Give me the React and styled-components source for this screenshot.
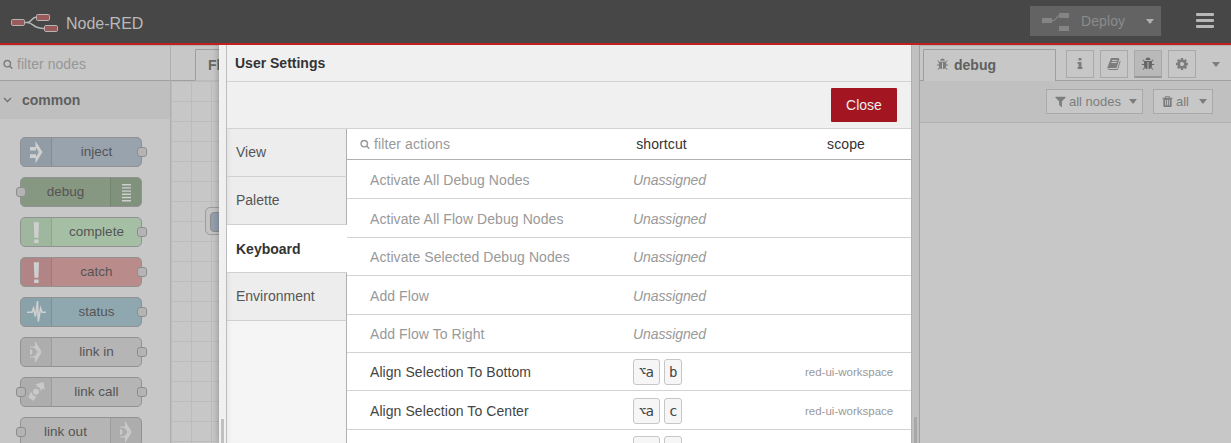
import React from "react";
import styled, { createGlobalStyle, css } from "styled-components";

const Global = createGlobalStyle`
  * { box-sizing: border-box; }
  body { margin: 0; overflow: hidden; background: #c7c7c7; }
  body, input, button { font-family: "Liberation Sans", Arial, sans-serif; font-size: 14px; }
`;

/* ---------- icons ---------- */

const PATHS = {
  search:
    "M1216 832q0-185-131.5-316.5t-316.5-131.5-316.5 131.5-131.5 316.5 131.5 316.5 316.5 131.5 316.5-131.5 131.5-316.5zm512 832q0 52-38 90t-90 38q-54 0-90-38l-343-342q-179 124-399 124-143 0-273.5-55.5t-225-150-150-225-55.5-273.5 55.5-273.5 150-225 225-150 273.5-55.5 273.5 55.5 225 150 150 225 55.5 273.5q0 220-124 399l343 343q37 37 37 90z",
  cog: "M1152 896q0-106-75-181t-181-75-181 75-75 181 75 181 181 75 181-75 75-181zm512-109v222q0 12-8 23t-20 13l-185 28q-19 54-39 91 35 50 107 138 10 12 10 25t-9 23q-27 37-99 108t-94 71q-12 0-26-9l-138-108q-44 23-91 38-16 136-29 186-7 28-36 28h-222q-14 0-24.5-8.5t-11.5-21.5l-28-184q-49-16-90-37l-141 107q-10 9-25 9-14 0-25-11-126-114-165-168-7-10-7-23 0-12 8-23 15-21 51-66.5t54-70.5q-27-50-41-99l-183-27q-13-2-21-12.5t-8-23.5v-222q0-12 8-23t19-13l186-28q14-46 39-92-40-57-107-138-10-12-10-24 0-10 9-23 26-36 98.5-107.5t94.5-71.5q13 0 26 10l138 107q44-23 91-38 16-136 29-186 7-28 36-28h222q14 0 24.5 8.5t11.5 21.5l28 184q49 16 90 37l142-107q9-9 24-9 13 0 25 10 129 119 165 170 7 8 7 22 0 12-8 23-15 21-51 66.5t-54 70.5q26 50 41 98l183 28q13 2 21 12.5t8 23.5z",
  filter:
    "M1595 295q17 41-14 70l-493 493v742q0 42-39 59-13 5-25 5-27 0-45-19l-256-256q-19-19-19-45v-486l-493-493q-31-29-14-70 17-39 59-39h1280q42 0 59 39z",
  trash:
    "M704 1376v-704q0-14-9-23t-23-9h-64q-14 0-23 9t-9 23v704q0 14 9 23t23 9h64q14 0 23-9t9-23zm256 0v-704q0-14-9-23t-23-9h-64q-14 0-23 9t-9 23v704q0 14 9 23t23 9h64q14 0 23-9t9-23zm256 0v-704q0-14-9-23t-23-9h-64q-14 0-23 9t-9 23v704q0 14 9 23t23 9h64q14 0 23-9t9-23zm-544-992h448l-48-117q-7-9-17-11h-317q-10 2-17 11zm928 32v64q0 14-9 23t-23 9h-96v948q0 83-47 143.5t-113 60.5h-832q-66 0-113-58.5t-47-141.5v-952h-96q-14 0-23-9t-9-23v-64q0-14 9-23t23-9h309l70-167q15-37 54-63t79-26h320q40 0 79 26t54 63l70 167h309q14 0 23 9t9 23z",
  info: "M1216 1344v128q0 26-19 45t-45 19h-512q-26 0-45-19t-19-45v-128q0-26 19-45t45-19h64v-384h-64q-26 0-45-19t-19-45v-128q0-26 19-45t45-19h384q26 0 45 19t19 45v576h64q26 0 45 19t19 45zm-128-1152v192q0 26-19 45t-45 19h-256q-26 0-45-19t-19-45v-192q0-26 19-45t45-19h256q26 0 45 19t19 45z",
  book: "M1703 478q40 57 18 129l-275 906q-19 64-76.5 107.5t-122.5 43.5h-923q-77 0-148.5-53.5t-99.5-131.5q-24-67-2-127 0-4 3-27t4-37q1-8-3-21.5t-3-19.5q2-11 8-21t16.5-23.5 16.5-23.5q23-38 45-91.5t30-91.5q3-10 .5-30t-.5-28q3-11 17-28t17-23q21-36 42-92t25-90q1-9-2.5-32t.5-28q4-13 22-30.5t22-22.5q19-26 42.5-84.5t27.5-96.5q1-8-3-25.5t-2-26.5q2-8 9-18t18-23 17-21q8-12 16.5-30.5t15-35 16-36 19.5-32 26.5-23.5 36-11.5 47.5 5.5l-1 3q38-9 51-9h761q74 0 114 56t18 130l-274 906q-36 119-71.5 153.5t-128.5 34.5h-869q-27 0-38 15-11 16-1 43 24 70 144 70h923q29 0 56-15.5t35-41.5l300-987q7-22 5-57 38 15 59 43zm-1064 2q-4 13 2 22.5t20 9.5h608q13 0 25.5-9.5t16.5-22.5l21-64q4-13-2-22.5t-20-9.5h-608q-13 0-25.5 9.5t-16.5 22.5zm-83 256q-4 13 2 22.5t20 9.5h608q13 0 25.5-9.5t16.5-22.5l21-64q4-13-2-22.5t-20-9.5h-608q-13 0-25.5 9.5t-16.5 22.5z",
  bug: "M1696 960q0 26-19 45t-45 19h-224q0 171-67 290l208 209q19 19 19 45t-19 45q-18 19-45 19t-45-19l-198-197q-5 5-15 13t-42 28.5-65 36.5-82 29-97 13v-896h-128v896q-51 0-101.5-13.5t-87-33-66-39-43.5-32.5l-15-14-183 207q-20 21-48 21-24 0-43-16-19-18-20.5-44.5t15.5-46.5l202-227q-58-114-58-274h-224q-26 0-45-19t-19-45 19-45 45-19h224v-294l-173-173q-19-19-19-45t19-45 45-19 45 19l173 173h844l173-173q19-19 45-19t45 19 19 45-19 45l-173 173v294h224q26 0 45 19t19 45zm-480-576h-640q0-133 93.5-226.5t226.5-93.5 226.5 93.5 93.5 226.5z",
};

const Svg = styled.svg`
  display: block;
  flex: none;
`;

const Icon = ({ name, size = 14, color = "#7d7d7d" }) => (
  <Svg width={size} height={size} viewBox="0 0 1792 1792" fill={color}>
    <path d={PATHS[name]} />
  </Svg>
);

const Caret = styled.span`
  flex: none;
  border: 4px solid transparent;
  border-top-width: 5px;
  border-top-color: ${(p) => p.$color || "#7d7d7d"};
  border-bottom: 0;
`;

const Logo = () => (
  <Svg width="48" height="20" viewBox="0 0 48 20" fill="none">
    <path d="M13 9.5h3c5 0 4-5.5 10-5.5M16 9.5c7 0 5 6 17 6" stroke="#b4b4b4" strokeWidth="1.5" />
    <g fill="#9b5a5a" stroke="#b4b4b4" strokeWidth="1">
      <rect x="0.5" y="6.5" width="13" height="6" rx="1.2" />
      <rect x="25.5" y="1.5" width="13" height="6" rx="1.2" />
      <rect x="33.5" y="12.5" width="13" height="6" rx="1.2" />
    </g>
  </Svg>
);

const DeployIcon = () => (
  <Svg width="28" height="20" viewBox="0 -2 28 20" fill="#848484">
    <path d="M9 7.5h2c4 0 3-5 7-5" fill="none" stroke="#848484" strokeWidth="1.3" />
    <rect x="0" y="5" width="10" height="5" />
    <rect x="17" y="0" width="10" height="5" />
    <rect x="17" y="13" width="10" height="5" />
  </Svg>
);

const NODE_ICONS = {
  inject: <path d="M9 9h5.500V3l7 11-7 11.500V20H9v-3.800h6V19l2.800-4.900L15 9.500v2.900H9z" />,
  debug: (
    <path d="M11 6h9v1.400h-9zM11 9.200h9v1.400h-9zM11 12.400h9v1.400h-9zM11 15.600h9V17h-9zM11 18.800h9v1.400h-9zM11 22h9v1.400h-9z" />
  ),
  alert: <path d="M12.800 4.300h5.200l-.6 15.400h-4zM13.200 21.500h4.400v3.500h-4.400z" />,
  status: (
    <path
      d="M6 14.200h5l1.500-4 2 8.300 2-15.500.8 20.500 2.300-13.300 1.500 4H25"
      fill="none"
      stroke="#cfcfcf"
      strokeWidth="1.600"
    />
  ),
  link: (
    <g fill="#c9c9c9">
      <path d="M9 8.500h5V3l6.700 10.800h-4.700a5.500 5.500 0 0 0-4.500-4.300H9z" />
      <path d="M9 19.500h5V25l6.700-10.800h-4.700a5.500 5.500 0 0 1-4.500 4.300H9z" />
      <path d="M9 10.700a3.400 3.400 0 0 1 0 6.600z" />
    </g>
  ),
  call: (
    <g fill="#c9c9c9">
      <path d="M14 6.500L22.300 4 24 12l-2.300-1.500-1.900 2.700a5 5 0 0 0-4.600-4.600l1.400-1.200z" />
      <circle cx="15" cy="13.700" r="3" />
      <path d="M9.200 15.300l1.200-1.800a5 5 0 0 0 4.800 5L12.700 23 7.300 19.300z" />
    </g>
  ),
};

/* ---------- header ---------- */

const Header = styled.header`
  display: flex;
  align-items: center;
  height: 45px;
  padding: 0 17px 0 11px;
  background: #474747;
  border-bottom: 2px solid #c02020;
`;

const Brand = styled.div`
  display: flex;
  align-items: center;
  gap: 7px;
  flex: 1;
  color: #b9b9b9;
  font-size: 16px;
  padding-top: 3px;
`;

const BrandName = styled.span`
  line-height: 18px;
  padding-top: 2px;
`;

const DeployButton = styled.div`
  display: flex;
  align-items: center;
  width: 131px;
  height: 30px;
  margin: 0 35px 1px 0;
  padding: 0 7px 0 12px;
  background: #636363;
  color: #8b8b8b;
  span:first-of-type { flex: 1; padding-left: 11px; letter-spacing: 0.1px; }
`;

const MenuBars = styled.div`
  display: flex;
  flex-direction: column;
  justify-content: space-between;
  width: 18px;
  height: 15px;
  margin-bottom: 2px;
  i { height: 3px; border-radius: 1px; background: #b7b7b7; }
`;

/* ---------- workspace frame ---------- */

const Main = styled.main`
  display: flex;
  height: 398px;
  overflow: hidden;
`;

const Palette = styled.aside`
  width: 171px;
  flex: none;
  background: #c7c7c7;
  border-top: 1px solid #b2b2b2;
  border-right: 1px solid #aeaeae;
`;

const PaletteSearch = styled.div`
  display: flex;
  align-items: center;
  gap: 4px;
  height: 35px;
  padding: 2px 0 0 3px;
  border-bottom: 1px solid #a0a0a0;
  color: #969696;
  letter-spacing: 0.05px;
`;

const Category = styled.div`
  display: flex;
  align-items: center;
  gap: 10px;
  height: 38px;
  padding-left: 3px;
  background: #bfbfbf;
  color: #606060;
  font-weight: bold;
`;

const NodeList = styled.div`
  display: flex;
  flex-direction: column;
  gap: 10px;
  padding: 18px 0 0 20px;
`;

const NodeBox = styled.div`
  position: relative;
  display: flex;
  flex-direction: ${(p) => (p.$flip ? "row-reverse" : "row")};
  flex: none;
  width: 122px;
  height: 30px;
  border: 1px solid #929292;
  border-radius: 5px;
  background: ${(p) => p.$color};
  color: #545454;
`;

const NodeIcon = styled.div`
  width: 31px;
  background: rgba(0, 0, 0, 0.04);
  ${(p) =>
    p.$flip
      ? css`border-left: 1px solid rgba(0, 0, 0, 0.1); border-radius: 0 4px 4px 0;`
      : css`border-right: 1px solid rgba(0, 0, 0, 0.1); border-radius: 4px 0 0 4px;`}
`;

const NodeLabel = styled.div`
  flex: 1;
  text-align: center;
  font-size: 13.5px;
  line-height: 28px;
`;

const Port = styled.i`
  position: absolute;
  top: 9px;
  ${(p) => (p.$side === "left" ? "left: -5px;" : "right: -6px;")}
  width: 10px;
  height: 10px;
  border: 1px solid #8d8d8d;
  border-radius: 3px;
  background: #b4b4b4;
`;

const Workspace = styled.section`
  width: 48px;
  flex: none;
  overflow: hidden;
  background: #c7c7c7;
  border-top: 1px solid #b2b2b2;
`;

const TabStrip = styled.div`
  display: flex;
  height: 35px;
  padding-top: 3px;
  &::before { content: ""; width: 24px; flex: none; border-bottom: 1px solid #a0a0a0; }
`;

const FlowTab = styled.div`
  flex: none;
  width: 120px;
  padding-left: 12px;
  border: 1px solid #9f9f9f;
  border-bottom-color: #bcbcbc;
  color: #686868;
  font-weight: bold;
  line-height: 31px;
`;

const Canvas = styled.div`
  position: relative;
  height: 362px;
  background-color: #c7c7c7;
  background-image: linear-gradient(#bcbcbc 1px, transparent 1px),
    linear-gradient(90deg, #bcbcbc 1px, transparent 1px);
  background-size: 20px 20px;
`;

const CanvasNode = styled.div`
  position: absolute;
  left: 34px;
  top: 126px;
  width: 80px;
  height: 28px;
  padding: 4px;
  border: 1px solid #9c9c9c;
  border-radius: 5px;
  background: #c3c3c3;
  &::before {
    content: "";
    display: block;
    height: 18px;
    border: 1px solid #8d8d8d;
    border-radius: 4px;
    background: #93a0ad;
  }
`;

/* ---------- settings tray ---------- */

const Tray = styled.section`
  position: relative;
  display: flex;
  width: 693px;
  flex: none;
  background: #f0f0f0;
  border-right: 1px solid #b0b0b0;
  box-shadow: 0 0 7px rgba(0, 0, 0, 0.3);
`;

const ResizeHandle = styled.div`
  position: relative;
  display: flex;
  align-items: flex-end;
  justify-content: center;
  width: ${(p) => p.$width}px;
  flex: none;
  background: ${(p) => p.$bg};
  border-right: 1px solid ${(p) => p.$line};
  &::after {
    content: "";
    width: 3px;
    height: ${(p) => p.$grip}px;
    background: ${(p) => p.$gripColor};
  }
`;

const TrayBody = styled.div`
  flex: 1;
  display: flex;
  flex-direction: column;
  height: 398px;
`;

const TrayTitle = styled.div`
  flex: none;
  height: 37px;
  padding-left: 8px;
  border-bottom: 1px solid #d3d3d3;
  color: #333;
  font-weight: bold;
  line-height: 37px;
`;

const TrayToolbar = styled.div`
  display: flex;
  flex: none;
  justify-content: flex-end;
  align-items: center;
  height: 47px;
  padding-right: 14px;
  border-bottom: 1px solid #d3d3d3;
`;

const CloseButton = styled.button`
  width: 66px;
  height: 34px;
  padding: 0;
  border: 0;
  border-radius: 1px;
  background: #a31621;
  color: #eee;
`;

const TrayContent = styled.div`
  display: flex;
  flex: 1;
  min-height: 0;
  overflow: hidden;
  background: #fff;
`;

const TabMenu = styled.nav`
  display: flex;
  flex-direction: column;
  width: 120px;
  flex: none;
  background: #f5f5f5;
  box-shadow: inset 5px 0 6px -5px rgba(0, 0, 0, 0.08);
  &::after { content: ""; flex: 1; border-right: 1px solid #b0b0b0; }
`;

const MenuTab = styled.div`
  flex: none;
  height: 48px;
  padding-left: 9px;
  border-bottom: 1px solid #d0d0d0;
  line-height: 47px;
  ${(p) =>
    p.$active
      ? css`background: #fff; color: #333; font-weight: bold; line-height: 48px;`
      : css`background: rgba(0, 0, 0, 0.032); color: #555; border-right: 1px solid #b0b0b0;`}
`;

const Shortcuts = styled.div`
  flex: 1;
  display: flex;
  flex-direction: column;
`;

const ShortcutHeader = styled.div`
  display: grid;
  grid-template-columns: 249px 131px 1fr;
  align-items: center;
  flex: none;
  height: 31px;
  border-bottom: 1px solid #b0b0b0;
  color: #333;
  letter-spacing: 0.1px;
  text-align: center;
`;

const ScopeHeading = styled.span`
  padding-left: 54px;
`;

const ActionFilter = styled.div`
  display: flex;
  align-items: center;
  gap: 4px;
  padding-left: 13px;
  color: #999;
`;

const ShortcutRow = styled.div`
  display: grid;
  grid-template-columns: 263px 1fr 88px 18px;
  align-items: center;
  flex: none;
  height: ${(p) => p.$height}px;
  padding: ${(p) => (p.$height > 38 ? 2 : 0)}px 0 0 23px;
  border-bottom: 1px solid #d3d3d3;
  color: ${(p) => (p.$muted ? "#999" : "#444")};
`;

const ActionName = styled.span`
  letter-spacing: 0.07px;
`;

const Unassigned = styled.em`
  color: #999;
  letter-spacing: -0.1px;
`;

const Keys = styled.div`
  display: flex;
  gap: 4px;
`;

const Key = styled.kbd`
  display: flex;
  align-items: center;
  justify-content: center;
  width: ${(p) => (p.$wide ? 27 : 18)}px;
  height: 26px;
  border: 1px solid #c6c6c6;
  border-radius: 3px;
  background: #f6f6f6;
  color: #444;
  font: 14px "DejaVu Sans Mono", monospace;
  letter-spacing: -0.3px;
`;

const Modifier = styled.span`
  font-size: 11px;
  font-weight: bold;
`;

const Scope = styled.span`
  color: #999;
  font-size: 11.500px;
  white-space: nowrap;
`;

/* ---------- sidebar ---------- */

const Sidebar = styled.aside`
  flex: 1;
  background: #c7c7c7;
  border-top: 1px solid #b2b2b2;
`;

const SidebarTabs = styled.div`
  display: flex;
  height: 35px;
  border-bottom: 1px solid #a0a0a0;
  padding-left: 3px;
`;

const SidebarTab = styled.div`
  display: flex;
  align-items: center;
  gap: 5px;
  width: 133px;
  height: 32px;
  margin-top: 3px;
  padding: 0 0 2px 12px;
  border: 1px solid #9f9f9f;
  border-bottom: 0;
  background: #c7c7c7;
  color: #606060;
  font-weight: bold;
`;

const TabButtons = styled.div`
  display: flex;
  gap: 6px;
  padding: 4px 0 0 10px;
`;

const TabButton = styled.div`
  display: flex;
  align-items: center;
  justify-content: center;
  width: 28px;
  height: 28px;
  border: 1px solid #a9a9a9;
  ${(p) => p.$active && css`background: #b9b9b9; border-bottom: 2px solid #979797;`}
`;

const TabMore = styled.div`
  display: flex;
  align-items: center;
  padding: 2px 0 0 16px;
`;

const SidebarToolbar = styled.div`
  display: flex;
  justify-content: flex-end;
  gap: 10px;
  height: 42px;
  padding: 8px 18px 0 0;
  background: #c0c0c0;
  border-bottom: 1px solid #b2b2b2;
`;

const ToolButton = styled.div`
  display: flex;
  align-items: center;
  width: ${(p) => p.$width}px;
  height: 25px;
  padding: 0 5px 0 7px;
  border: 1px solid #a9a9a9;
  background: #c7c7c7;
  color: #7d7d7d;
  font-size: 13px;
  span:first-of-type { flex: 1; padding-left: 2px; white-space: nowrap; }
`;

const NODES = [
  { label: "inject", icon: "inject", color: "#98a3ae", out: true },
  { label: "debug", icon: "debug", color: "#869882", in: true, flip: true },
  { label: "complete", icon: "alert", color: "#a5bfa5", out: true },
  { label: "catch", icon: "alert", color: "#b98b8b", out: true },
  { label: "status", icon: "status", color: "#8fa8b0", out: true },
  { label: "link in", icon: "link", color: "#b5b5b5", out: true },
  { label: "link call", icon: "call", color: "#b5b5b5", in: true, out: true },
  { label: "link out", icon: "link", color: "#b5b5b5", in: true, flip: true },
];

const ACTIONS = [
  { name: "Activate All Debug Nodes", height: 39 },
  { name: "Activate All Flow Debug Nodes", height: 39 },
  { name: "Activate Selected Debug Nodes", height: 38 },
  { name: "Add Flow", height: 39 },
  { name: "Add Flow To Right", height: 38 },
  { name: "Align Selection To Bottom", height: 38, key: "b" },
  { name: "Align Selection To Center", height: 39, key: "c" },
];

export default function App() {
  return (
    <>
      <Global />
      <Header>
        <Brand>
          <Logo />
          <BrandName>Node-RED</BrandName>
        </Brand>
        <DeployButton>
          <DeployIcon />
          <span>Deploy</span>
          <Caret $color="#b0b0b0" />
        </DeployButton>
        <MenuBars><i /><i /><i /></MenuBars>
      </Header>
      <Main>
        <Palette>
          <PaletteSearch>
            <Icon name="search" size={10} />
            <span>filter nodes</span>
          </PaletteSearch>
          <Category>
            <Svg width="9" height="6" viewBox="0 0 9 6" fill="none" stroke="#707070" strokeWidth="1.3">
              <path d="M1 1l3.500 3.500L8 1" />
            </Svg>
            <span>common</span>
          </Category>
          <NodeList>
            {NODES.map((n) => (
              <NodeBox key={n.label} $color={n.color} $flip={n.flip}>
                <NodeIcon $flip={n.flip}>
                  <Svg width="30" height="28" viewBox="0 0 30 28" fill="#cfcfcf">
                    {NODE_ICONS[n.icon]}
                  </Svg>
                </NodeIcon>
                <NodeLabel>{n.label}</NodeLabel>
                {n.in && <Port $side="left" />}
                {n.out && <Port $side="right" />}
              </NodeBox>
            ))}
          </NodeList>
        </Palette>
        <Workspace>
          <TabStrip>
            <FlowTab>Fl</FlowTab>
          </TabStrip>
          <Canvas>
            <CanvasNode />
          </Canvas>
        </Workspace>
        <Tray>
          <ResizeHandle $width={8} $bg="#f0f0f0" $line="#bcbcbc" $grip={24} $gripColor="#c0c0c0" />
          <TrayBody>
            <TrayTitle>User Settings</TrayTitle>
            <TrayToolbar>
              <CloseButton>Close</CloseButton>
            </TrayToolbar>
            <TrayContent>
              <TabMenu>
                <MenuTab>View</MenuTab>
                <MenuTab>Palette</MenuTab>
                <MenuTab $active>Keyboard</MenuTab>
                <MenuTab>Environment</MenuTab>
              </TabMenu>
              <Shortcuts>
                <ShortcutHeader>
                  <ActionFilter>
                    <Icon name="search" size={10} color="#999" />
                    <span>filter actions</span>
                  </ActionFilter>
                  <span>shortcut</span>
                  <ScopeHeading>scope</ScopeHeading>
                </ShortcutHeader>
                {ACTIONS.map((a) => (
                  <ShortcutRow key={a.name} $height={a.height} $muted={!a.key}>
                    <ActionName>{a.name}</ActionName>
                    {a.key ? (
                      <Keys>
                        <Key $wide><Modifier>⌥</Modifier>a</Key>
                        <Key>{a.key}</Key>
                      </Keys>
                    ) : (
                      <Unassigned>Unassigned</Unassigned>
                    )}
                    {a.key && <Scope>red-ui-workspace</Scope>}
                  </ShortcutRow>
                ))}
                <ShortcutRow $height={38}>
                  <span />
                  <Keys>
                    <Key $wide />
                    <Key />
                  </Keys>
                </ShortcutRow>
              </Shortcuts>
            </TrayContent>
          </TrayBody>
        </Tray>
        <ResizeHandle $width={8} $bg="#c0c0c0" $line="#a0a0a0" $grip={26} $gripColor="#a8a8a8" />
        <Sidebar>
          <SidebarTabs>
            <SidebarTab>
              <Icon name="bug" size={13} />
              <span>debug</span>
            </SidebarTab>
            <TabButtons>
              <TabButton><Icon name="info" /></TabButton>
              <TabButton><Icon name="book" /></TabButton>
              <TabButton $active><Icon name="bug" color="#666" /></TabButton>
              <TabButton><Icon name="cog" /></TabButton>
            </TabButtons>
            <TabMore><Caret /></TabMore>
          </SidebarTabs>
          <SidebarToolbar>
            <ToolButton $width={97}>
              <Icon name="filter" size={13} />
              <span>all nodes</span>
              <Caret />
            </ToolButton>
            <ToolButton $width={60}>
              <Icon name="trash" size={13} />
              <span>all</span>
              <Caret />
            </ToolButton>
          </SidebarToolbar>
        </Sidebar>
      </Main>
    </>
  );
}
